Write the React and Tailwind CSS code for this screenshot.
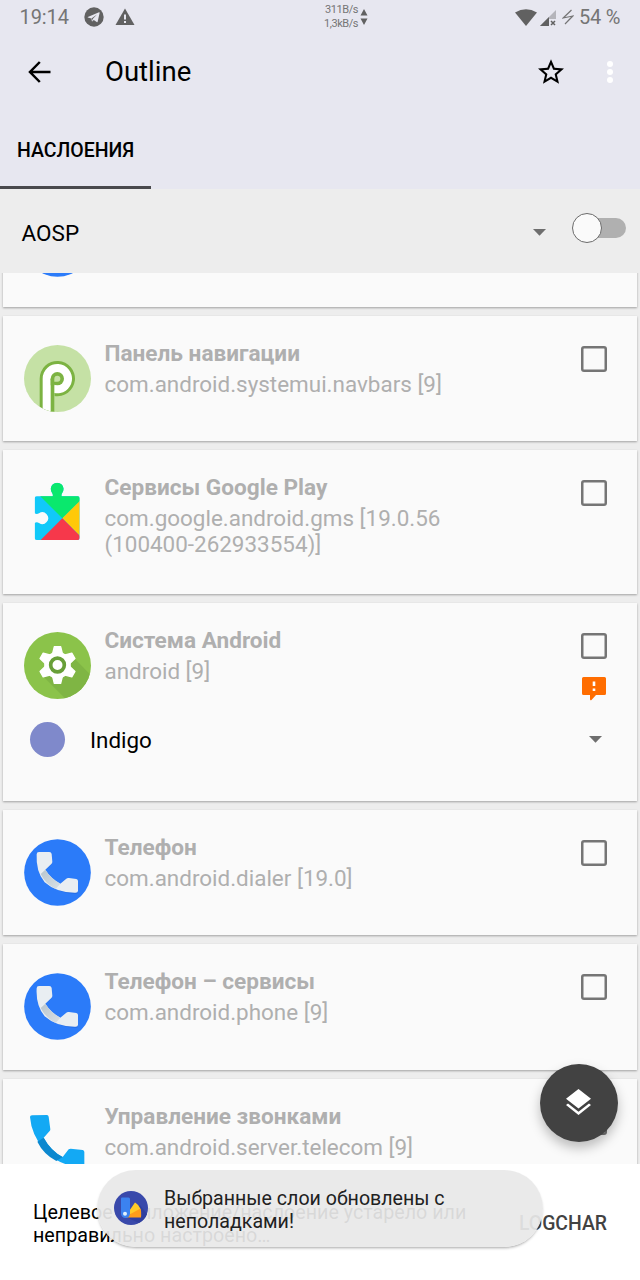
import React from 'react';

function DialerIcon() {
  return (
    <svg viewBox="0 0 201 201" className="size-[67px]">
      <linearGradient id="handset-fold" x1="0" y1="0" x2="1" y2="1">
        <stop offset="0" stopColor="#b9c6ce" />
        <stop offset="1" stopColor="#d9e0e5" />
      </linearGradient>
      <circle cx="100.500" cy="100.500" r="100" fill="#2b7bf9" />
      <path d="M39 50Q39 42 45 42L76 41Q81 41 82 46L84 74L62 96Q80 124 109 139L131 121L157 124Q162 125 162 130V159Q162 165 155 165Q103 163 68 128Q38 94 39 50Z" fill="#1b5fd6" opacity=".5" />
      <path d="M38 46Q38 39 45 39L76 39Q82 39 83 45L85 68Q85 72 82 75L64 92Q80 118 109 134L126 120Q130 116 135 117L157 120Q162 121 162 126V155Q162 161 155 161Q98 162 62 130Q35 98 38 46Z" fill="#e9eef2" />
      <path d="M64 92Q80 118 109 134L95 150Q64 134 50 105Z" fill="url(#handset-fold)" />
    </svg>
  );
}

function TelecomIcon() {
  return (
    <svg viewBox="0 0 201 201" className="size-[67px]">
      <path d="M18 27Q18 22 24 22L69 21Q73 21 74 26L79 64Q79 67 77 69L59 89Q80 128 116 147L134 124Q136 122 140 122L176 126Q181 127 181 132V174Q181 180 175 180Q105 172 62 128Q22 80 18 27Z" fill="#13a9f4" />
      <path d="M59 89Q80 128 116 147L97 159Q58 138 40 101Z" fill="#0c88cf" />
    </svg>
  );
}

function PieIcon() {
  return (
    <svg viewBox="0 0 201 201" className="size-[67px]">
      <clipPath id="pie-disc"><circle cx="100.500" cy="100.500" r="100.500" /></clipPath>
      <g clipPath="url(#pie-disc)">
        <rect width="201" height="201" fill="#c5e1a5" />
        <path d="M47 220V101A53 53 0 1 1 91 153V220Z" fill="#7cb342" />
        <path d="M56 220V101A44 44 0 1 1 91 144V220Z" fill="#fff" />
        <path d="M80 220V101H91V220Z" fill="#7cb342" />
        <circle cx="100" cy="101" r="20" fill="#7cb342" />
        <path d="M80 101H91V121H80Z" fill="#7cb342" />
        <path d="M91 110V101A9 9 0 1 1 100 110Z" fill="#c5e1a5" />
      </g>
    </svg>
  );
}

function PlayServicesIcon() {
  return (
    <svg viewBox="72 56 201 201" className="size-[67px]">
      <clipPath id="puzzle">
        <path d="M110 108H158Q160 103 156 97A19 19 0 1 1 187 97Q183 103 185 108H233Q239 108 239 114V233Q239 239 233 239H110Q104 239 104 233V188Q110 184 117 188A17.500 17.500 0 1 0 117 159Q110 163 104 159V114Q104 108 110 108Z" />
      </clipPath>
      <g clipPath="url(#puzzle)">
        <rect x="90" y="50" width="160" height="200" fill="#11c9f9" />
        <path d="M90 77L121 108V50H250V111L187 174Z" fill="#0ae86d" />
        <path d="M250 111L187 174L250 237Z" fill="#ffc908" />
        <path d="M187 174L111 250H250V237Z" fill="#f6384b" />
      </g>
    </svg>
  );
}

function AndroidSystemIcon() {
  const tooth = 'M91 44H110L115 64V134L110 154H91L86 134V64Z';
  return (
    <svg viewBox="0 0 201 201" className="size-[67px]">
      <clipPath id="gear-disc"><circle cx="100.500" cy="100.500" r="100.500" /></clipPath>
      <g clipPath="url(#gear-disc)">
        <rect width="201" height="201" fill="#8bc34a" />
        <path d="M60 136L125 201H201V130L150 78Z" fill="#7fb544" />
        <g fill="#fff" stroke="#fff" strokeWidth="4" strokeLinejoin="round">
          <circle cx="100.500" cy="99" r="38" />
          <path d={tooth} />
          <path d={tooth} transform="rotate(60 100.500 99)" />
          <path d={tooth} transform="rotate(120 100.500 99)" />
        </g>
        <circle cx="100.500" cy="99" r="20.500" fill="#fff" stroke="#689f38" strokeWidth="11" />
      </g>
    </svg>
  );
}

function Checkbox() {
  return <div className="size-[26px] rounded-[3px] shadow-[inset_0_0_0_2.5px_#757575]" />;
}

function Caret() {
  return (
    <svg viewBox="0 0 13 7" className="h-[7px] w-[13px]"><path d="M0 0H13L6.500 6.700Z" fill="#6e6e6e" /></svg>
  );
}

function Card({ icon, title, lines, children, size, alert }) {
  return (
    <section className={`${size} shrink-0 bg-[#fafafa] shadow-[0_1px_2px_rgba(0,0,0,0.32)]`}>
      <div className="flex pl-[21px] pr-[30px]">
        <div className="mt-[29px] size-[67px] shrink-0">{icon}</div>
        <div className="ml-[13.500px] mt-[25px] grow text-[22.450px] leading-[26px] text-[#afafaf]">
          <h2 className="text-[22.600px] font-bold">{title}</h2>
          <div className="mt-[4px]">
            {lines.map((l) => <p key={l} className="whitespace-nowrap">{l}</p>)}
          </div>
        </div>
        {title && (
          <div className="mt-[30px] flex flex-col items-center">
            <Checkbox />
            {alert && (
              <svg viewBox="0 0 24 24" className="mt-[18px] size-[24px]">
                <path d="M1.500 0H22.500Q24 0 24 1.500V16.500Q24 18 22.500 18H14L9.500 23Q8 24 8 22V18H1.500Q0 18 0 16.500V1.500Q0 0 1.500 0Z" fill="#ff6d00" />
                <path d="M10.700 4.500H13.300V9H10.700ZM10.700 11.500H13.300V14H10.700Z" fill="#fff" />
              </svg>
            )}
          </div>
        )}
      </div>
      {children}
    </section>
  );
}

const SMALL = 'h-[125.500px]';

export default function App() {
  return (
    <div className="relative flex h-[1280px] w-[640px] flex-col overflow-hidden bg-[#ededed] font-['Roboto',sans-serif] text-black">
      <header className="flex h-[189px] shrink-0 flex-col bg-[#e7e7f0]">
        <div className="flex h-[34px] items-center text-[#757575]">
          <span className="ml-[19.500px] w-[64.500px] text-[20px] leading-[24px] tracking-[-0.1px]">19:14</span>
          <svg viewBox="0 0 20 20" className="size-[20px]">
            <circle cx="10" cy="10" r="9.700" fill="#616161" />
            <path d="M3.800 9.900L15 5.300Q15.800 5 15.600 6L13.700 14.600Q13.500 15.500 12.700 15L9.800 12.900L8.400 14.300Q7.900 14.700 7.800 14L7.300 11.500L3.900 10.500Q3.300 10.200 3.800 9.900Z" fill="#e7e7f0" />
            <path d="M7.500 11.400L13 7.600L8.700 12L8 14Z" fill="#616161" />
          </svg>
          <svg viewBox="0 0 20 18" className="ml-[11px] h-[18px] w-[20px]">
            <path d="M10 .5L19.500 17H.5Z" fill="#616161" />
            <path d="M9 6.500H11V11.500H9ZM9 13H11V15H9Z" fill="#e7e7f0" />
          </svg>
          <div className="ml-[186px] w-[37px] whitespace-nowrap text-right text-[11px] leading-[14px] tracking-[-0.45px]">
            <p>311B/s</p>
            <p>1,3kB/s</p>
          </div>
          <svg viewBox="0 0 8 18" className="ml-[2px] h-[18px] w-[8px]">
            <path d="M4 1L7.500 7.500H.5ZM.5 10.500H7.500L4 17Z" fill="#616161" />
          </svg>
          <svg viewBox="0 0 22 17" className="ml-[147px] h-[17px] w-[22px]">
            <path d="M0 3.500Q11-3 22 3.500L11 17Z" fill="#616161" />
          </svg>
          <svg viewBox="0 0 17 17" className="ml-[3px] size-[17px]">
            <path d="M0 17L16 1V10H9V17Z" fill="#b4b4ba" />
            <path d="M0 17L9 8V17Z" fill="#616161" />
            <path d="M11 12L15 16M15 12L11 16" stroke="#616161" strokeWidth="1.500" />
          </svg>
          <svg viewBox="0 0 12 16" className="ml-[5px] h-[16px] w-[12px]">
            <path d="M9.500 1L1.200 9L10.800 7L3 15" fill="none" stroke="#757575" strokeWidth="1.200" />
          </svg>
          <span className="ml-[5px] whitespace-nowrap text-[20px] leading-[24px] tracking-[-0.2px]">54 %</span>
        </div>
        <div className="flex h-[76px] items-center">
          <svg viewBox="0 0 23 22" className="ml-[28px] h-[22px] w-[23px]" fill="none" stroke="#000" strokeWidth="2.500">
            <path d="M22.500 11H2M11.800 1L2 11L11.800 21" />
          </svg>
          <h1 className="ml-[54px] grow text-[27.500px] leading-[32px]">Outline</h1>
          <svg viewBox="2 2 20 19" className="-mt-[2px] h-[25px] w-[26px]">
            <path d="M22 9.240l-7.190-.62L12 2 9.190 8.630 2 9.240l5.460 4.730L5.820 21 12 17.270 18.180 21l-1.630-7.030L22 9.240zM12 15.400l-3.760 2.270 1-4.280-3.320-2.880 4.380-.38L12 6.100l1.710 4.040 4.380.38-3.320 2.880 1 4.280L12 15.400z" />
          </svg>
          <div className="ml-[43px] mr-[27px] flex flex-col gap-[2px]">
            <i className="size-[6px] rounded-full bg-white" />
            <i className="size-[6px] rounded-full bg-white" />
            <i className="size-[6px] rounded-full bg-white" />
          </div>
        </div>
        <div className="flex w-[151px] grow flex-col border-b-[3px] border-[#49494d] pl-[17px] pt-[29px] text-[19.500px] font-medium leading-[24px]">НАСЛОЕНИЯ</div>
      </header>

      <div className="z-10 flex h-[83.500px] shrink-0 items-start bg-[#ededed] pl-[21.500px] pr-[14px]">
        <span className="mt-[30.500px] grow text-[22.500px] leading-[26px]">AOSP</span>
        <div className="mt-[40px]"><Caret /></div>
        <div className="ml-[26px] mt-[24px] flex h-[30px] w-[54px] items-center">
          <div className="z-10 size-[30px] shrink-0 rounded-full border border-[#6b6b6b] bg-[#fafafa]" />
          <div className="-ml-[15px] h-[20px] w-[39px] rounded-r-full bg-[#b0b0b0]" />
        </div>
      </div>

      <main className="h-[891.500px] shrink-0 overflow-hidden">
        <div className="-mt-[91.500px] flex flex-col gap-[9px] px-[3px]">
          <Card size={SMALL} icon={<DialerIcon />} title="" lines={[]} />
          <Card size={SMALL} icon={<PieIcon />} title="Панель навигации" lines={['com.android.systemui.navbars [9]']} />
          <Card size="h-[143.500px]" icon={<PlayServicesIcon />} title="Сервисы Google Play" lines={['com.google.android.gms [19.0.56', '(100400-262933554)]']} />
          <Card size="h-[198px]" icon={<AndroidSystemIcon />} title="Система Android" lines={['android [9]']} alert>
            <div className="mt-[21.500px] flex items-center pl-[27px] pr-[35px]">
              <i className="size-[35px] rounded-full bg-[#7f89cb]" />
              <span className="ml-[25px] grow text-[22.400px] leading-[26px]">Indigo</span>
              <Caret />
            </div>
          </Card>
          <Card size={SMALL} icon={<DialerIcon />} title="Телефон" lines={['com.android.dialer [19.0]']} />
          <Card size={SMALL} icon={<DialerIcon />} title="Телефон – сервисы" lines={['com.android.phone [9]']} />
          <Card size={SMALL} icon={<TelecomIcon />} title="Управление звонками" lines={['com.android.server.telecom [9]']} />
        </div>
      </main>

      <footer className="flex grow items-center bg-white pl-[33px] pr-[33px] pt-[2px]">
        <p className="mt-[2px] grow whitespace-nowrap text-[19.700px] leading-[23px]">
          Целевое приложение/наслоение устарело или<br />неправильно настроено…
        </p>
        <span className="text-[19.400px] font-medium leading-[23px] text-[#424242]">LOGCHAR</span>
      </footer>

      <button className="absolute left-[540px] top-[1064px] flex size-[77.500px] items-center justify-center rounded-full bg-[#424242] shadow-[0_6px_12px_rgba(0,0,0,0.25)]">
        <svg viewBox="0 0 25 27" className="h-[27px] w-[25px]" fill="#fff">
          <path d="M12.500 0L25 9.700L12.500 19.500L0 9.700ZM0 16L2 14.500L12.500 22.700L23 14.500L25 16L12.500 26Z" />
        </svg>
      </button>

      <div className="absolute left-[97px] top-[1170px] flex h-[77px] w-[446px] items-center rounded-full bg-[#e8e8e8]/93 pl-[17px] shadow-[0_2px_3px_-1px_rgba(0,0,0,0.35)]">
        <svg viewBox="0 0 34 34" className="-mt-[1px] size-[34px]">
          <circle cx="17" cy="17" r="17" fill="#3949ab" />
          <path d="M12 26L25 32Q31 29 33 23L26 14Z" fill="#303f9f" />
          <path d="M11 26L21 11.500Q25.500 14 26.500 19Z" fill="#ffca28" />
          <path d="M11 26L26.500 17.500Q27.500 20 27 26.500H11Z" fill="#ff9d1a" />
          <path d="M8 6.500H14.500Q16 6.500 16 8V22.500A4.500 4.500 0 0 1 7 22.500V7.500Q7 6.500 8 6.500Z" fill="#3b82f0" />
          <circle cx="11" cy="22.800" r="2" fill="#e3f2fd" />
        </svg>
        <p className="ml-[16px] mt-[2px] whitespace-nowrap text-[19.600px] leading-[23px] text-[#212121]">
          Выбранные слои обновлены с<br />неполадками!
        </p>
      </div>
    </div>
  );
}
